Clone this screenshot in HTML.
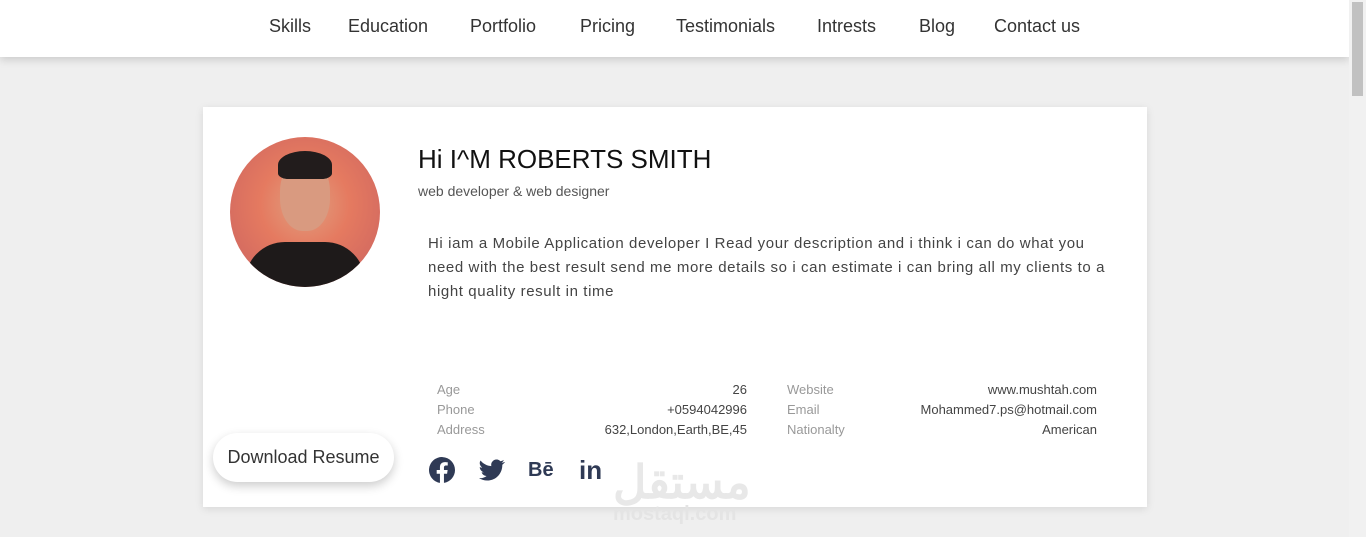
<!DOCTYPE html>
<html><head><meta charset="utf-8"><style>
*{margin:0;padding:0;box-sizing:border-box}
body{width:1366px;height:537px;background:#efefef;font-family:"Liberation Sans",sans-serif;position:relative;overflow:hidden;color:#333}
.nav{position:absolute;left:0;top:0;width:1349px;height:57px;background:#fff;box-shadow:0 3px 8px rgba(0,0,0,.15)}
.nav span{position:absolute;top:16px;font-size:18px;color:#333}
.sb{position:absolute;right:0;top:0;width:17px;height:537px;background:#f1f1f1}
.sb div{position:absolute;left:3px;top:2px;width:11px;height:94px;background:#c1c1c1}
.card{position:absolute;left:203px;top:107px;width:944px;height:400px;background:#fff;box-shadow:0 2px 8px rgba(0,0,0,.1)}
.av{position:absolute;left:27px;top:30px;width:150px;height:150px;border-radius:50%;background:radial-gradient(circle at 50% 45%,#e0a080 0,#e57a60 40%,#c86060 100%);overflow:hidden}
.av .shirt{position:absolute;left:15px;top:105px;width:120px;height:70px;background:#1e1a1a;border-radius:40px 40px 0 0}
.av .head{position:absolute;left:50px;top:22px;width:50px;height:72px;background:#d99a80;border-radius:45%}
.av .hair{position:absolute;left:48px;top:14px;width:54px;height:28px;background:#221c1c;border-radius:50% 50% 20% 20%}
.t{position:absolute;white-space:nowrap}
.lbl{color:#999;font-size:13px}
.val{color:#444;font-size:13px;text-align:right}
.btn{position:absolute;left:10px;top:326px;width:181px;height:49px;border-radius:25px;background:#fff;box-shadow:0 4px 10px rgba(0,0,0,.2);font-size:18px;color:#333;text-align:center;line-height:49px}
.ic{position:absolute;top:350px;fill:#2f3a55}
</style></head><body>
<div class="nav">
<span style="left:269px">Skills</span><span style="left:348px">Education</span><span style="left:470px">Portfolio</span><span style="left:580px">Pricing</span><span style="left:676px">Testimonials</span><span style="left:817px">Intrests</span><span style="left:919px">Blog</span><span style="left:994px">Contact us</span>
</div>
<div class="sb"><div></div></div>
<div class="card">
<div class="av"><div class="shirt"></div><div class="head"></div><div class="hair"></div></div>
<div class="t" style="left:215px;top:37px;font-size:26px;color:#111">Hi I^M ROBERTS SMITH</div>
<div class="t" style="left:215px;top:76px;font-size:14px;color:#555">web developer &amp; web designer</div>
<div class="t" style="left:225px;top:125px;font-size:15px;line-height:24px;color:#444;letter-spacing:0.6px">Hi iam a Mobile Application developer I Read your description and i think i can do what you<br>need with the best result send me more details so i can estimate i can bring all my clients to a<br>hight quality result in time</div>
<div class="t lbl" style="left:234px;top:275px">Age</div><div class="t lbl" style="left:234px;top:295px">Phone</div><div class="t lbl" style="left:234px;top:315px">Address</div>
<div class="t val" style="right:400px;top:275px">26</div><div class="t val" style="right:400px;top:295px">+0594042996</div><div class="t val" style="right:400px;top:315px">632,London,Earth,BE,45</div>
<div class="t lbl" style="left:584px;top:275px">Website</div><div class="t lbl" style="left:584px;top:295px">Email</div><div class="t lbl" style="left:584px;top:315px">Nationalty</div>
<div class="t val" style="right:50px;top:275px">www.mushtah.com</div><div class="t val" style="right:50px;top:295px">Mohammed7.ps@hotmail.com</div><div class="t val" style="right:50px;top:315px">American</div>
<div class="btn">Download Resume</div>
<svg class="ic" style="left:226px" width="26" height="26" viewBox="0 0 24 24"><path d="M24 12a12 12 0 1 0-13.9 11.9v-8.4H7.1V12h3V9.4c0-3 1.8-4.7 4.5-4.7 1.3 0 2.7.2 2.7.2v3h-1.5c-1.5 0-2 .9-2 1.9V12h3.4l-.5 3.5h-2.9v8.4A12 12 0 0 0 24 12z"/></svg>
<svg class="ic" style="left:276px" width="26" height="26" viewBox="0 0 24 24"><path d="M23.6 4.6c-.9.4-1.8.6-2.8.8 1-.6 1.8-1.6 2.1-2.7-.9.6-2 1-3.1 1.2a4.9 4.9 0 0 0-8.4 4.5C7.4 8.1 3.8 6.2 1.4 3.2a4.9 4.9 0 0 0 1.5 6.6c-.8 0-1.6-.3-2.2-.6 0 2.4 1.7 4.4 3.9 4.8-.7.2-1.5.2-2.2.1.6 2 2.4 3.4 4.6 3.4A9.9 9.9 0 0 1 0 19.5 14 14 0 0 0 7.5 21.7c9.1 0 14-7.5 14-14v-.6c1-.7 1.8-1.6 2.5-2.5z"/></svg>
<div class="t" style="left:325px;top:352px;font-size:20px;font-weight:bold;color:#2f3a55">Bē</div>
<div class="t" style="left:376px;top:348px;font-size:26px;font-weight:bold;color:#2f3a55">in</div>
<div class="t" style="left:410px;top:348px;font-size:46px;font-weight:bold;color:#e8e8e8">مستقل</div>
<div class="t" style="left:410px;top:396px;font-size:20px;font-weight:bold;color:#e4e4e4">mostaql.com</div>
</div>
</body></html>
